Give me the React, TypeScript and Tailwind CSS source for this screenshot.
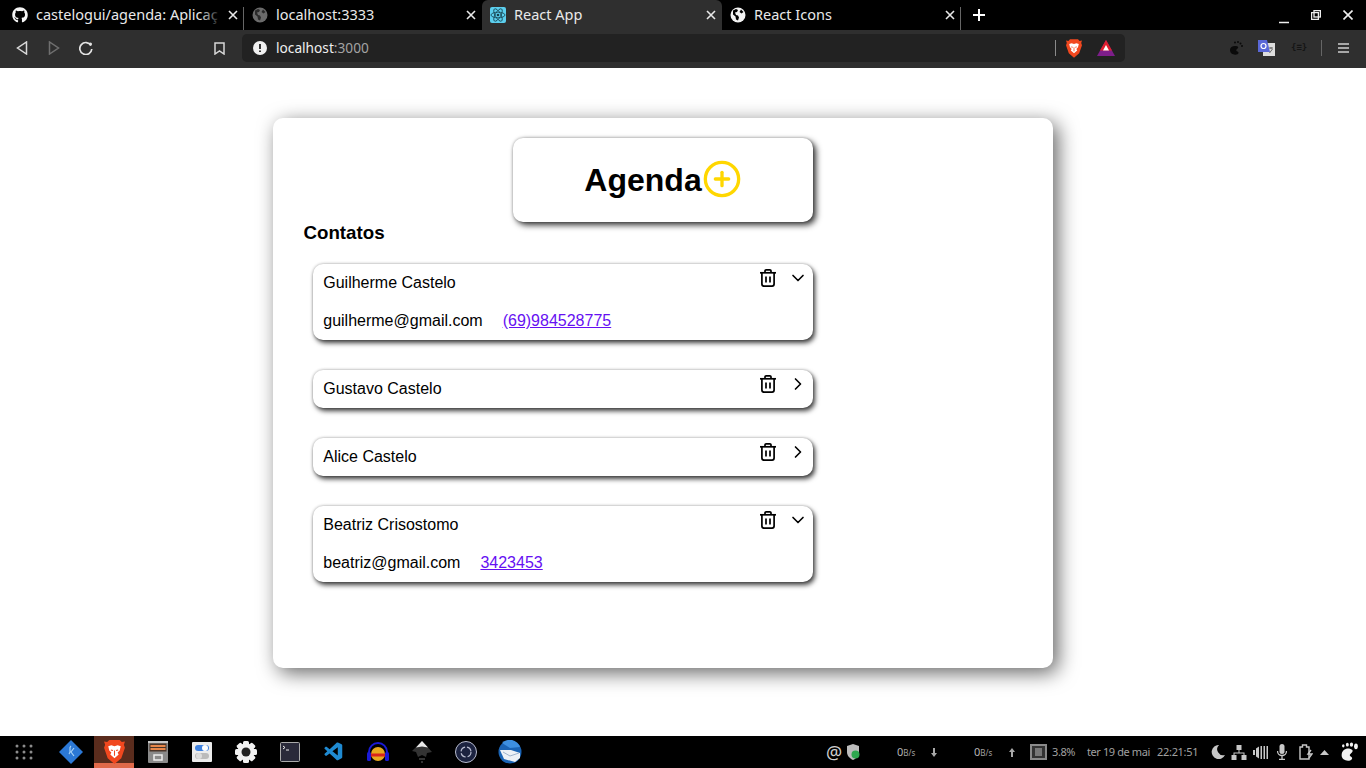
import { FaGithub } from "react-icons/fa";
import { FiChevronDown, FiChevronRight, FiPlusCircle } from "react-icons/fi";
import { VscVscode } from "react-icons/vsc";

const ui = "font-['Noto_Sans',sans-serif]";

function Globe({ dim }: { dim?: boolean }) {
  return (
    <svg width="16" height="16" viewBox="0 0 16 16">
      <circle cx="8" cy="8" r="7.5" fill={dim ? "#6b6b6b" : "#f2f2f2"} />
      <path d="M3 3.500l3-1.500 2 1-1 2-2 .5 1 2.500 2 .5 1 2-1 3-2-1-.5-3-2.500-2zM11 2.500l2.500 2.500-2 1.500-2-1.500z" fill={dim ? "#2a2a2a" : "#000"} />
    </svg>
  );
}

function ReactLogo() {
  return (
    <svg width="16" height="16" viewBox="0 0 16 16" className="rounded-[2px] bg-[#5ccfee]">
      <g fill="none" stroke="#16424f" strokeWidth=".8">
        <ellipse cx="8" cy="8" rx="7" ry="2.800" />
        <ellipse cx="8" cy="8" rx="7" ry="2.800" transform="rotate(60 8 8)" />
        <ellipse cx="8" cy="8" rx="7" ry="2.800" transform="rotate(120 8 8)" />
      </g>
      <circle cx="8" cy="8" r="1.300" fill="#16424f" />
    </svg>
  );
}

function BraveLogo({ width, height }: { width: number; height: number }) {
  return (
    <svg width={width} height={height} viewBox="0 0 20 23">
      <path d="M5 0h10l2 2 3-.5-1 3 1 3-3.500 10L10 23l-6.500-5.500L0 7.500l1-3-1-3 3 .5z" fill="#f1481f" />
      <path d="M4 6l3-1 3 1 3-1 3 1-1 4-2 2 1 2-4 3.500L6 14l1-2-2-2z" fill="#fff" />
      <path d="M6.500 9.500l2 .5M13.500 9.500l-2 .5M10 10v5" stroke="#f1481f" strokeWidth="1" />
    </svg>
  );
}

function TrashIcon() {
  return (
    <svg width="16" height="18" viewBox="0 0 16 18" fill="none" stroke="#000" strokeWidth="1.700" strokeLinejoin="round">
      <path d="M0 3.800h16" />
      <path d="M5 3.800V2a1.100 1.100 0 0 1 1.100-1.100h3.800A1.100 1.100 0 0 1 11 2v1.800" />
      <path d="M1.900 3.800v11.300a2 2 0 0 0 2 2h8.200a2 2 0 0 0 2-2V3.800" />
      <path d="M6 7.500v6M10 7.500v6" />
    </svg>
  );
}

function CloseX() {
  return (
    <svg width="10" height="10" viewBox="0 0 10 10" className="shrink-0" stroke="#e8e8e8" strokeWidth="1.600">
      <path d="M1 1l8 8M9 1l-8 8" />
    </svg>
  );
}

function Tab({ icon, title, active, width, first, sep, fade }: { icon: React.ReactNode; title: string; active?: boolean; width: string; first?: boolean; sep?: boolean; fade?: boolean }) {
  return (
    <div className={`${width} relative flex h-[30px] shrink-0 items-center pb-[1px] pr-[6px] ${first ? "pl-[12px]" : "pl-[8px]"} ${active ? "rounded-t-[6px] bg-[#2f2f2f]" : ""}`}>
      <span className="mr-[8px] shrink-0">{icon}</span>
      <span className="relative min-w-0 flex-1 whitespace-nowrap text-[14.500px] text-[#e9e9e9]">
        {title}
        {fade && <span className="absolute right-[6px] top-0 h-full w-[22px] bg-gradient-to-r from-transparent to-black" />}
      </span>
      <CloseX />
      {sep && <span className="absolute right-0 top-[7px] h-[23px] w-px bg-[#666]" />}
    </div>
  );
}

function TabBar() {
  return (
    <div className="flex h-[30px] items-start bg-black">
      <Tab width="w-[244px]" icon={<FaGithub size={16} color="#f5f5f5" />} title="castelogui/agenda: Aplicaç" first sep fade />
      <Tab width="w-[238px]" icon={<Globe dim />} title="localhost:3333" />
      <Tab width="w-[240px]" icon={<ReactLogo />} title="React App" active />
      <Tab width="w-[239px]" icon={<Globe />} title="React Icons" sep />
      <svg width="14" height="14" viewBox="0 0 14 14" className="ml-[11px] mt-[8px]" stroke="#fff" strokeWidth="2">
        <path d="M7 1v12M1 7h12" />
      </svg>
      <div className="ml-auto mr-[13px] flex h-[30px] items-center gap-[22px]">
        <svg width="10" height="10" viewBox="0 0 10 10" className="mt-[7px]"><path d="M0 8.500h10" stroke="#eee" strokeWidth="1.500" /></svg>
        <svg width="10" height="10" viewBox="0 0 10 10" fill="none" stroke="#eee" strokeWidth="1.300"><path d="M.6 2.600h6.800v6.800H.6z" /><rect x="3" y=".6" width="6.400" height="6.400" /></svg>
        <svg width="10" height="10" viewBox="0 0 10 10" stroke="#eee" strokeWidth="1.600"><path d="M.5.500l9 9M9.500.500l-9 9" /></svg>
      </div>
    </div>
  );
}

function Toolbar() {
  return (
    <div className="flex h-[38px] items-center bg-[#2f2f2f] pb-[2px]">
      <svg width="12" height="14" viewBox="0 0 12 14" fill="none" stroke="#d8d8d8" strokeWidth="1.500" className="ml-[16px]"><path d="M10.500 1v12l-9-6z" /></svg>
      <svg width="12" height="14" viewBox="0 0 12 14" fill="none" stroke="#6f6f6f" strokeWidth="1.500" className="ml-[20px]"><path d="M1.500 1v12l9-6z" /></svg>
      <svg width="14" height="14" viewBox="0 0 14 14" fill="none" stroke="#e4e4e4" strokeWidth="1.700" className="ml-[19px]"><path d="M12 4.500a6 6 0 1 0 .8 3.500" /><circle cx="11.500" cy="3" r="1.500" fill="#e4e4e4" stroke="none" /></svg>
      <svg width="11" height="13" viewBox="0 0 11 13" fill="none" stroke="#d8d8d8" strokeWidth="1.500" className="ml-[121px]"><path d="M1 1h9v11l-4.500-3-4.500 3z" /></svg>
      <div className="ml-[17px] flex h-[28px] w-[883px] items-center rounded-[5px] bg-[#222222]">
        <svg width="14" height="14" viewBox="0 0 14 14" className="ml-[11px]"><circle cx="7" cy="7" r="7" fill="#f1f1f1" /><path d="M7 3v5M7 9.500v1.500" stroke="#222" strokeWidth="1.800" /></svg>
        <span className="ml-[9px] text-[13.700px] text-[#efefef]">localhost<span className="text-[#a3a3a3]">:3000</span></span>
        <span className="ml-auto h-[16px] w-px bg-[#8a8a8a]" />
        <span className="ml-[10px]"><BraveLogo width={16} height={19} /></span>
        <svg width="18" height="16" viewBox="0 0 18 16" className="ml-[15px] mr-[10px]">
          <path d="M9 0l9 16H0z" fill="#7d1e8a" />
          <path d="M9 0l6 10.500H3z" fill="#e0202f" />
          <path d="M9 5l3 5.500H6z" fill="#fff" />
        </svg>
      </div>
      <svg width="14" height="14" viewBox="0 0 14 14" className="ml-[104px]" fill="#0a0a0a">
        <path d="M1 9c0-3 3-4.500 6-4 3 .5 2.500 2 1 3-1 .6-1 2 .5 2.500 1 .4 1.500 1.500.5 2.500-3 1.500-8 .5-8-4zM5 1.500a1 1 0 1 1 2 0 1 1 0 0 1-2 0zM8 1a1 1 0 1 1 2 0 1 1 0 0 1-2 0zM10.500 2.500a1 1 0 1 1 2 0 1 1 0 0 1-2 0zM12 5a1 1 0 1 1 2 0 1 1 0 0 1-2 0z" />
      </svg>
      <svg width="17" height="16" viewBox="0 0 17 16" className="ml-[15px]">
        <rect x="5" y="3" width="12" height="13" fill="#ddd" />
        <path d="M0 0h9l3 12H0z" fill="#5a68d8" />
        <circle cx="5.500" cy="6" r="2.500" fill="none" stroke="#fff" strokeWidth="1.200" />
        <path d="M11 8h4M13 7v2M11.500 13l3-4" stroke="#666" strokeWidth="1" />
      </svg>
      <span className="ml-[16px] w-[16px] text-center font-['DejaVu_Sans_Mono',monospace] text-[9px] font-bold text-[#151515]">{"{≡}"}</span>
      <span className="ml-[14px] h-[16px] w-px bg-[#666]" />
      <svg width="11" height="10" viewBox="0 0 11 10" className="ml-[16px]" stroke="#cfcfcf" strokeWidth="1.500"><path d="M0 1h11M0 5h11M0 9h11" /></svg>
    </div>
  );
}

const contacts = [
  { name: "Guilherme Castelo", email: "guilherme@gmail.com", phone: "(69)984528775", open: true },
  { name: "Gustavo Castelo", email: "", phone: "", open: false },
  { name: "Alice Castelo", email: "", phone: "", open: false },
  { name: "Beatriz Crisostomo", email: "beatriz@gmail.com", phone: "3423453", open: true },
];

function ContactCard({ name, email, phone, open }: { name: string; email: string; phone: string; open: boolean }) {
  return (
    <div className="w-[500px] rounded-[10px] bg-white shadow-[2px_3px_5px_rgba(0,0,0,0.75),0_0_3px_rgba(0,0,0,0.3)]">
      <div className="flex h-[38px] items-start justify-between pl-[10.250px] pr-[5px]">
        <span className="mt-[10px] leading-[18px]">{name}</span>
        <div className="mt-[4px] flex h-[20px] items-center gap-[12px]">
          <TrashIcon />
          {open ? <FiChevronDown size={20} /> : <FiChevronRight size={20} />}
        </div>
      </div>
      {open && (
        <div className="flex h-[38px] items-start gap-[20px] pl-[10.250px]">
          <span className="mt-[10px] leading-[18px]">{email}</span>
          <a href="#" className="mt-[10px] leading-[18px] text-[#6610f2] underline">{phone}</a>
        </div>
      )}
    </div>
  );
}

function Agenda() {
  return (
    <div className="ml-[273px] mt-[50px] h-[550px] w-[780px] rounded-[10px] bg-white pt-[20px] font-['Liberation_Sans',sans-serif] text-black shadow-[5px_5px_20px_rgba(0,0,0,0.6)]">
      <div className="ml-[240px] flex h-[84px] w-[300px] items-center justify-center rounded-[10px] bg-white shadow-[3px_3px_6px_rgba(0,0,0,0.8),0_0_3px_rgba(0,0,0,0.3)]">
        <h1 className="text-[32px] font-bold leading-[37px]">Agenda</h1>
        <FiPlusCircle size={40} color="#ffd700" className="mb-[2px]" />
      </div>
      <h2 className="ml-[30.500px] text-[18.720px] font-bold leading-[21px]">Contatos</h2>
      <div className="ml-[40px] mt-[21px] flex flex-col gap-[30px]">
        {contacts.map((c) => (
          <ContactCard key={c.name} {...c} />
        ))}
      </div>
    </div>
  );
}

function DockIcons() {
  return (
    <>
      <div className="flex w-[48px] justify-center">
        <svg width="18" height="16" viewBox="0 0 18 16" fill="#8c8c8c">
          {[1, 7, 13].flatMap((y) => [2, 9, 16].map((x) => <circle key={`${x}-${y}`} cx={x} cy={y + 1} r="1.500" />))}
        </svg>
      </div>
      <div className="flex w-[46px] justify-center">
        <svg width="24" height="24" viewBox="0 0 24 24"><path d="M12 0l12 12-12 12L0 12z" fill="#2b78d6" /><path d="M12 6c-3 2 1 5-2 8M15 8l-3 4 3 4" fill="none" stroke="#a9d3f7" strokeWidth="1.200" /></svg>
      </div>
      <div className="flex h-[32px] w-[40px] items-center justify-center border-b-[5px] border-[#e0694a] bg-[#5a2c1d] pt-[5px]">
        <BraveLogo width={21} height={24} />
      </div>
      <div className="flex w-[48px] justify-center">
        <svg width="20" height="22" viewBox="0 0 20 22"><rect width="20" height="22" rx="1" fill="#8a8a8a" /><rect y="0" width="20" height="2" fill="#c8c8c8" /><rect x="1.500" y="2.500" width="17" height="8" fill="#4a3428" /><path d="M2.500 5h15M2.500 8h15" stroke="#e8874a" strokeWidth="2" /><rect x="6" y="14" width="8" height="5" fill="none" stroke="#eee" strokeWidth="1.500" /></svg>
      </div>
      <div className="-ml-[2px] flex w-[44px] justify-center">
        <svg width="20" height="20" viewBox="0 0 20 20"><rect width="20" height="20" rx="1" fill="#ececec" /><rect x="3" y="3" width="14" height="6" rx="3" fill="#3f82e0" /><circle cx="13" cy="6" r="3" fill="#fff" /><rect x="3" y="11" width="14" height="6" rx="3" fill="#bbb" /><circle cx="7" cy="14" r="3" fill="#ddd" /></svg>
      </div>
      <div className="flex w-[44px] justify-center">
        <svg width="22" height="22" viewBox="0 0 22 22"><g fill="#f2f2f2">{[0, 45, 90, 135].map((a) => <rect key={a} x="8" y="0" width="6" height="22" rx="1.500" transform={`rotate(${a} 11 11)`} />)}<circle cx="11" cy="11" r="8.500" /></g><circle cx="11" cy="11" r="4.500" fill="#222" /></svg>
      </div>
      <div className="flex w-[44px] justify-center">
        <svg width="20" height="20" viewBox="0 0 20 20"><rect x=".5" y=".5" width="19" height="19" rx="1" fill="#2a2a3a" stroke="#aaa" /><path d="M3 4l2 1.500-2 1.500M6 8h3" stroke="#eee" fill="none" /></svg>
      </div>
      <div className="flex w-[44px] justify-center">
        <VscVscode size={22} color="#1f8ad2" />
      </div>
      <div className="flex w-[44px] justify-center">
        <svg width="24" height="24" viewBox="0 0 24 24"><path d="M3 18v-6a9 9 0 0 1 18 0v6" fill="none" stroke="#1a1ad6" strokeWidth="2" /><rect x="1" y="12" width="4" height="9" rx="1.500" fill="#1a1ad6" /><rect x="19" y="12" width="4" height="9" rx="1.500" fill="#1a1ad6" /><ellipse cx="12" cy="14" rx="7" ry="7" fill="#e8a81e" /><path d="M5 15h14" stroke="#d9241c" strokeWidth="3" /></svg>
      </div>
      <div className="flex w-[44px] justify-center">
        <svg width="24" height="24" viewBox="0 0 24 24"><path d="M12 1l10 11-5 1-1 4-4-2-4 2-2-5-4-1z" fill="#333" /><path d="M12 1l6 6.500-6-1-6 1z" fill="#e8e8e8" /><path d="M9 19h6M11 22h2" stroke="#444" strokeWidth="1.500" /></svg>
      </div>
      <div className="flex w-[44px] justify-center">
        <svg width="22" height="22" viewBox="0 0 22 22"><circle cx="11" cy="11" r="10.500" fill="#1c2340" stroke="#b9bdd0" /><circle cx="11" cy="11" r="5" fill="none" stroke="#b9bdd0" strokeWidth="1.200" strokeDasharray="6 2" /></svg>
      </div>
      <div className="flex w-[44px] justify-center">
        <svg width="24" height="24" viewBox="0 0 24 24"><circle cx="12" cy="12" r="11.500" fill="#1b64b5" /><path d="M4 3a11 11 0 0 1 18 4l-10 1z" fill="#3d8fe0" /><path d="M2 10l11 0 9 3v5l-5 4-11-3z" fill="#eef1f6" /><path d="M5 12l7 4 9-3" fill="none" stroke="#9fb3cc" /></svg>
      </div>
    </>
  );
}

function Tray() {
  return (
    <div className="ml-auto flex h-[32px] w-[540px] items-center justify-end whitespace-nowrap pr-[8px] text-[#a0a0a0]">
      <span className="w-[15px] text-center text-[18px] leading-none text-[#cfcfcf]">@</span>
      <svg width="14" height="16" viewBox="0 0 14 16" className="ml-[5px]"><path d="M7 0l6 2v6c0 4-3 6.500-6 8-3-1.500-6-4-6-8V2z" fill="#bdbdbd" /><circle cx="9.500" cy="10.500" r="4" fill="#2fa84f" /></svg>
      <span className="ml-[37px] w-[16px] text-[8px]"><span className="text-[11px] text-[#b5b5b5]">0</span>B/s</span>
      <svg width="6" height="9" viewBox="0 0 6 9" fill="#a8a8a8" className="ml-[18px]"><path d="M2 0h2v5h2L3 9 0 5h2z" /></svg>
      <span className="ml-[37px] w-[16px] text-[8px]"><span className="text-[11px] text-[#b5b5b5]">0</span>B/s</span>
      <svg width="6" height="9" viewBox="0 0 6 9" fill="#a8a8a8" className="ml-[19px]"><path d="M2 9h2V4h2L3 0 0 4h2z" /></svg>
      <svg width="17" height="16" viewBox="0 0 17 16" className="ml-[15px]"><rect width="17" height="16" fill="#8a8a8a" /><rect x="2" y="2" width="13" height="12" fill="#333" /><rect x="5" y="4" width="7" height="8" fill="#777" /></svg>
      <span className="ml-[5px] w-[23px] text-[11px] tracking-[-0.4px]">3.8%</span>
      <span className="ml-[12px] w-[63px] text-[11px] tracking-[-0.4px]">ter 19 de mai</span>
      <span className="ml-[7px] w-[41px] text-[11px] tracking-[-0.3px]">22:21:51</span>
      <svg width="14" height="14" viewBox="0 0 14 14" className="ml-[13px]"><path d="M8 0a7 7 0 1 0 6 10 6 6 0 0 1-6-10z" fill="#c8c8c8" /></svg>
      <svg width="16" height="15" viewBox="0 0 15 15" fill="#c8c8c8" className="ml-[6px]"><rect x="5" width="5" height="5" /><rect y="10" width="5" height="5" /><rect x="10" y="10" width="5" height="5" /><path d="M7 5h1v2.500h5V10h-1V8.500H3V10H2V7.500h5z" /></svg>
      <svg width="15" height="15" viewBox="0 0 15 15" fill="#c8c8c8" className="ml-[6px]"><path d="M0 5h2v5H0zM3 3.500l3-2v12l-3-2z" /><path d="M7.500 1h1.500v13H7.500zM10.500 1H12v13h-1.500zM13.500 1H15v13h-1.500z" /></svg>
      <svg width="10" height="16" viewBox="0 0 10 16" className="ml-[9px]" fill="none" stroke="#c8c8c8"><rect x="2.500" y="0" width="5" height="10" rx="2.500" fill="#c8c8c8" stroke="none" /><path d="M.5 7a4.500 4.500 0 0 0 9 0M5 11.500V15M2 15.500h6" strokeWidth="1.300" /></svg>
      <svg width="14" height="16" viewBox="0 0 14 16" className="ml-[12px]" fill="none" stroke="#c8c8c8" strokeWidth="1.400"><path d="M1 3h2.500V1h4v2H10v12H1z" /><path d="M12 6l-3 4h4l-3 4" /></svg>
      <svg width="9" height="5" viewBox="0 0 11 6" className="ml-[7px]"><path d="M5.500 0L11 6H0z" fill="#c8c8c8" /></svg>
      <svg width="18" height="24" viewBox="0 0 22 24" className="ml-[11px]" fill="#f2f2f2"><path d="M2 16c0-6 5-9 10-8 5 1 4 4 1 6-2 1.500-1 3 1 4 1.500 1 1 3-1 4-5 2-11-1-11-6z" /><ellipse cx="4" cy="4.500" rx="1.500" ry="2" /><ellipse cx="9" cy="3" rx="1.800" ry="2.400" /><ellipse cx="14" cy="3" rx="2" ry="2.600" /><ellipse cx="19.500" cy="5" rx="2.300" ry="3.500" /></svg>
    </div>
  );
}

function Taskbar() {
  return (
    <div className={`${ui} flex h-[32px] items-center bg-black`}>
      <DockIcons />
      <Tray />
    </div>
  );
}

export default function App() {
  return (
    <div className="flex h-[768px] w-[1366px] flex-col overflow-hidden bg-white">
      <div className={ui}>
        <TabBar />
        <Toolbar />
      </div>
      <main className="h-[668px] shrink-0">
        <Agenda />
      </main>
      <Taskbar />
    </div>
  );
}
